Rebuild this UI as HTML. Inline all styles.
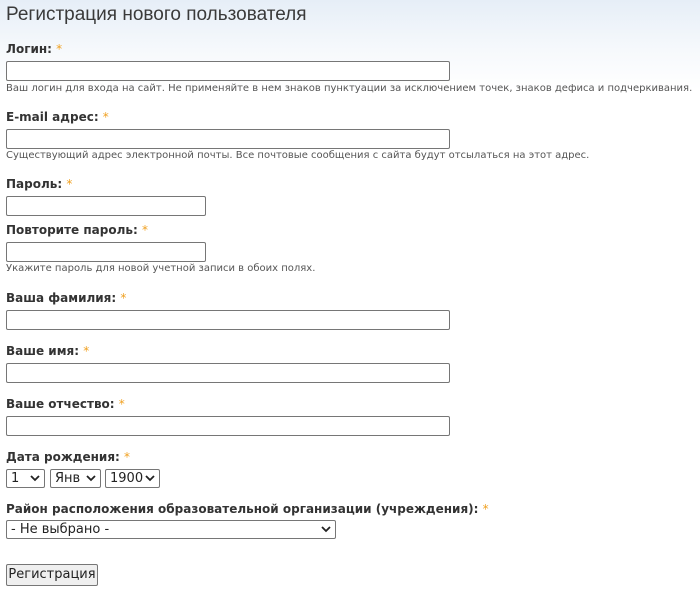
<!DOCTYPE html>
<html><head><meta charset="utf-8"><style>
body{margin:0;width:700px;height:593px;overflow:hidden;background:linear-gradient(180deg,#e6eef7 0px,#f6f9fc 50px,#ffffff 90px);font-family:"DejaVu Sans",Verdana,sans-serif;color:#333;position:relative}
.a{position:absolute;white-space:nowrap}
h1{position:absolute;left:6px;top:4px;margin:0;font:normal 19px "Liberation Sans",Arial,sans-serif;color:#3a3a3a}
.l{font-weight:bold;font-size:12px;color:#333}
.l b{color:#f0a020;font-weight:normal}
.d{font-size:10px;color:#555}
.i{position:absolute;left:6px;height:18px;border:1px solid #767676;border-radius:2px;background:#fff;box-sizing:content-box}
.s{position:absolute;height:17px;border:1px solid #767676;border-radius:2px;background:#fff;font:13px "DejaVu Sans",sans-serif;color:#222;line-height:17px;padding-left:4px;box-sizing:content-box}
.s svg{position:absolute;right:4px;top:5px}
</style></head><body>
<h1>Регистрация нового пользователя</h1>
<div class="a l" style="left:6px;top:42px">Логин: <b>*</b></div>
<div class="i" style="top:61px;width:442px"></div>
<div class="a d" style="left:6px;top:83px">Ваш логин для входа на сайт. Не применяйте в нем знаков пунктуации за исключением точек, знаков дефиса и подчеркивания.</div>
<div class="a l" style="left:6px;top:110px">E-mail адрес: <b>*</b></div>
<div class="i" style="top:129px;width:442px"></div>
<div class="a d" style="left:6px;top:150px">Существующий адрес электронной почты. Все почтовые сообщения с сайта будут отсылаться на этот адрес.</div>
<div class="a l" style="left:6px;top:177px">Пароль: <b>*</b></div>
<div class="i" style="top:196px;width:198px"></div>
<div class="a l" style="left:6px;top:223px">Повторите пароль: <b>*</b></div>
<div class="i" style="top:242px;width:198px"></div>
<div class="a d" style="left:6px;top:263px">Укажите пароль для новой учетной записи в обоих полях.</div>
<div class="a l" style="left:6px;top:291px">Ваша фамилия: <b>*</b></div>
<div class="i" style="top:310px;width:442px"></div>
<div class="a l" style="left:6px;top:344px">Ваше имя: <b>*</b></div>
<div class="i" style="top:363px;width:442px"></div>
<div class="a l" style="left:6px;top:397px">Ваше отчество: <b>*</b></div>
<div class="i" style="top:416px;width:442px"></div>
<div class="a l" style="left:6px;top:450px">Дата рождения: <b>*</b></div>
<div class="s" style="left:6px;top:469px;width:33px">1<svg width="10" height="7"><path d="M1 1l4 4 4-4" stroke="#222" stroke-width="1.8" fill="none"/></svg></div>
<div class="s" style="left:50px;top:469px;width:45px">Янв<svg width="10" height="7"><path d="M1 1l4 4 4-4" stroke="#222" stroke-width="1.8" fill="none"/></svg></div>
<div class="s" style="left:105px;top:469px;width:49px">1900<svg width="10" height="7"><path d="M1 1l4 4 4-4" stroke="#222" stroke-width="1.8" fill="none"/></svg></div>
<div class="a l" style="left:6px;top:502px">Район расположения образовательной организации (учреждения): <b>*</b></div>
<div class="s" style="left:6px;top:520px;width:324px">- Не выбрано -<svg width="10" height="7"><path d="M1 1l4 4 4-4" stroke="#222" stroke-width="1.8" fill="none"/></svg></div>
<div class="a" style="left:6px;top:564px;width:90px;height:20px;border:1px solid #767676;border-radius:2px;background:#efefef;font:13px 'DejaVu Sans',sans-serif;color:#222;text-align:center;line-height:20px">Регистрация</div>
</body></html>
